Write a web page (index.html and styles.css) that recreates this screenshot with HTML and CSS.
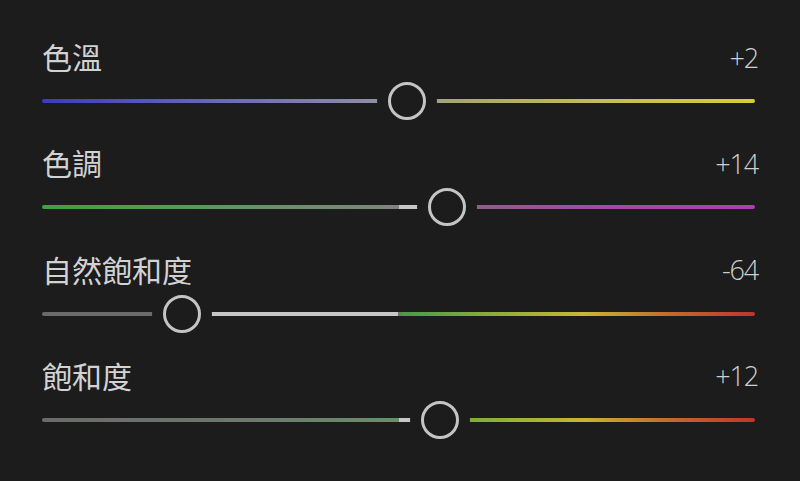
FILE: index.html
```html
<!DOCTYPE html>
<html lang="zh-Hant">
<head>
  <meta charset="UTF-8">
  <title>色彩</title>
  <link rel="stylesheet" href="styles.css">
</head>
<body>
  <div class="panel">

    <div class="row">
      <div class="head">
        <span class="label">色溫</span>
        <span class="value">+2</span>
      </div>
      <div class="slider">
        <div class="track temp"></div>
        <div class="knob" style="left: 51.2%;"></div>
      </div>
    </div>

    <div class="row">
      <div class="head">
        <span class="label">色調</span>
        <span class="value">+14</span>
      </div>
      <div class="slider">
        <div class="track tint"></div>
        <div class="fill" style="left: 50%; width: 6.8%;"></div>
        <div class="knob" style="left: 56.8%;"></div>
      </div>
    </div>

    <div class="row">
      <div class="head">
        <span class="label">自然飽和度</span>
        <span class="value">-64</span>
      </div>
      <div class="slider">
        <div class="track vibrance"></div>
        <div class="fill" style="left: 19.5%; width: 30.5%;"></div>
        <div class="knob" style="left: 19.6%;"></div>
      </div>
    </div>

    <div class="row">
      <div class="head">
        <span class="label">飽和度</span>
        <span class="value">+12</span>
      </div>
      <div class="slider">
        <div class="track saturation"></div>
        <div class="fill" style="left: 50%; width: 5.8%;"></div>
        <div class="knob" style="left: 55.8%;"></div>
      </div>
    </div>

  </div>
</body>
</html>
```

FILE: styles.css
```css
html, body {
  margin: 0;
  padding: 0;
  height: 100%;
  background-color: #1c1c1c;
  overflow: hidden;
}

.panel {
  padding: 36px 45px 0 42px;
}

.row {
  height: 106.33px;
  display: flex;
  flex-direction: column;
}

.head {
  height: 40px;
  display: flex;
  justify-content: space-between;
  align-items: center;
}

.label {
  font-family: "Noto Sans CJK TC", "Noto Sans CJK SC", sans-serif;
  font-size: 30px;
  line-height: 40px;
  color: #d2d2d2;
}

.value {
  font-family: "Open Sans", "Noto Sans", sans-serif;
  font-weight: 300;
  font-size: 27px;
  letter-spacing: -1.2px;
  line-height: 40px;
  color: #cfcfcf;
  margin-top: 3px;
  margin-right: -3px;
}

.slider {
  position: relative;
  height: 40px;
  margin-top: 5px;
  display: flex;
  align-items: center;
}

.track {
  width: 100%;
  height: 4px;
  border-radius: 2px;
}

.temp {
  background: linear-gradient(90deg, #3b3bc4 0%, #6a6ab4 25%, #8e8ea6 47%, #a4a27a 55%, #c6bf52 80%, #d8cd32 100%);
}

.tint {
  background: linear-gradient(90deg, #3fa13f 0%, #5f975f 25%, #7d857d 49%, #8a5f8a 60%, #a548a5 82%, #b23cb2 100%);
}

.vibrance {
  background: linear-gradient(90deg, #6a6a6a 0%, #6e6e6e 50%, #4a9a46 50.5%, #8cac3a 63%, #c8b832 76%, #c46a2a 88%, #c0352a 100%);
}

.saturation {
  background: linear-gradient(90deg, #6a6a6a 0%, #6c7a6c 30%, #6a8e6a 50%, #5aa83c 53%, #98b434 66%, #c8b432 76%, #c46a2c 88%, #c0352a 100%);
}

.fill {
  position: absolute;
  top: 18px;
  height: 4px;
  background-color: #c6c6c6;
}

.knob {
  position: absolute;
  top: 1px;
  width: 32px;
  height: 32px;
  margin-left: -19px;
  border: 3px solid #c4c4c4;
  border-radius: 50%;
  background-color: #1c1c1c;
  box-shadow: 0 0 0 11px #1c1c1c;
}
```
